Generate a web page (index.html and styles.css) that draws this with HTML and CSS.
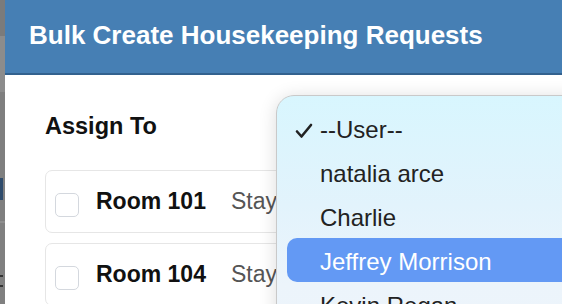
FILE: index.html
```html
<!DOCTYPE html>
<html lang="en">
<head>
  <meta charset="UTF-8" />
  <title>Bulk Create Housekeeping Requests</title>
  <link rel="stylesheet" href="styles.css">
</head>
<body>
  <div class="page">
    <div class="backdrop">
      <span class="backdrop-thumb"></span>
      <span class="backdrop-mark"></span>
    </div>

    <div class="modal">
      <header class="modal-header">
        <h1>Bulk Create Housekeeping Requests</h1>
      </header>

      <div class="modal-body">
        <div class="field-label">Assign To</div>

        <div class="room-card">
          <span class="checkbox"></span>
          <span class="room-name">Room 101</span>
          <span class="room-status">Stay</span>
        </div>
        <div class="room-card">
          <span class="checkbox"></span>
          <span class="room-name">Room 104</span>
          <span class="room-status">Stay</span>
        </div>
      </div>

      <ul class="user-menu">
        <li class="menu-item selected">
          <svg class="check" width="18" height="16" viewBox="0 0 18 16">
            <polyline points="2,8.5 6.5,13.5 16,2" fill="none" stroke="#222" stroke-width="2.6" stroke-linecap="round" stroke-linejoin="round"/>
          </svg>--User--
        </li>
        <li class="menu-item">natalia arce</li>
        <li class="menu-item">Charlie</li>
        <li class="menu-item active">Jeffrey Morrison</li>
        <li class="menu-item">Kevin Regan</li>
      </ul>
    </div>
  </div>
</body>
</html>
```

FILE: styles.css
```css
body {
  margin: 0;
  font-family: "Liberation Sans", Arial, sans-serif;
  background: #fff;
  overflow: hidden;
}

.page {
  display: flex;
  height: 304px;
}

.backdrop {
  width: 5px;
  position: relative;
  background: linear-gradient(#7b7b7b 0, #7b7b7b 36px, #8c8c8c 36px, #8c8c8c 92px, #7f7f7f 92px, #7f7f7f 221px, #8e8e8e 221px, #8e8e8e 223px, #808080 223px);
}

.backdrop-thumb {
  position: absolute;
  left: 0;
  top: 178px;
  width: 3px;
  height: 22px;
  background: #2e4b6b;
}

.backdrop-mark {
  position: absolute;
  left: 0;
  top: 275px;
  width: 3px;
  height: 12px;
  border-top: 2px solid #333;
  border-bottom: 2px solid #333;
  box-sizing: border-box;
}

.modal {
  flex: 1;
  position: relative;
  background: #fff;
}

.modal-header {
  height: 73px;
  background: #467fb4;
  border-bottom: 2px solid #32618e;
  padding-left: 24px;
}

.modal-header h1 {
  margin: 0;
  color: #fff;
  font-size: 26px;
  line-height: 70px;
  font-weight: bold;
}

.modal-body {
  padding: 38px 0 0 40px;
}

.field-label {
  font-size: 23.5px;
  font-weight: bold;
  color: #111;
  line-height: 26px;
  margin-bottom: 31px;
}

.room-card {
  display: flex;
  align-items: center;
  height: 61px;
  border: 1px solid #e6e6e6;
  border-radius: 7px;
  padding-left: 9px;
  margin-bottom: 10px;
}

.checkbox {
  width: 22px;
  height: 22px;
  border: 1px solid #d4d8de;
  border-radius: 5px;
  margin-top: 6px;
  margin-right: 17px;
  background: #fff;
}

.room-name {
  font-size: 23px;
  font-weight: bold;
  color: #111;
  margin-right: 25px;
}

.room-status {
  font-size: 23px;
  color: #555;
}

.user-menu {
  position: absolute;
  left: 271px;
  top: 95px;
  width: 320px;
  height: 260px;
  margin: 0;
  padding: 10px 0 0;
  list-style: none;
  border: 1px solid #c9c9c9;
  border-radius: 18px;
  background: linear-gradient(#d8f6fe 0, #e2f3fc 40%, #ecf4fb 70%, #eef5fb 100%);
  box-shadow: 0 2px 18px rgba(0, 0, 0, 0.14);
}

.menu-item {
  position: relative;
  height: 44px;
  padding: 3px 0 0 43px;
  box-sizing: border-box;
  line-height: 41px;
  font-size: 24px;
  color: #222;
}

.menu-item .check {
  position: absolute;
  left: 18px;
  top: 17px;
}

.menu-item.active {
  background: #6399f4;
  color: #fff;
  margin-left: 10px;
  padding-left: 33px;
  border-radius: 10px 0 0 10px;
}
```
